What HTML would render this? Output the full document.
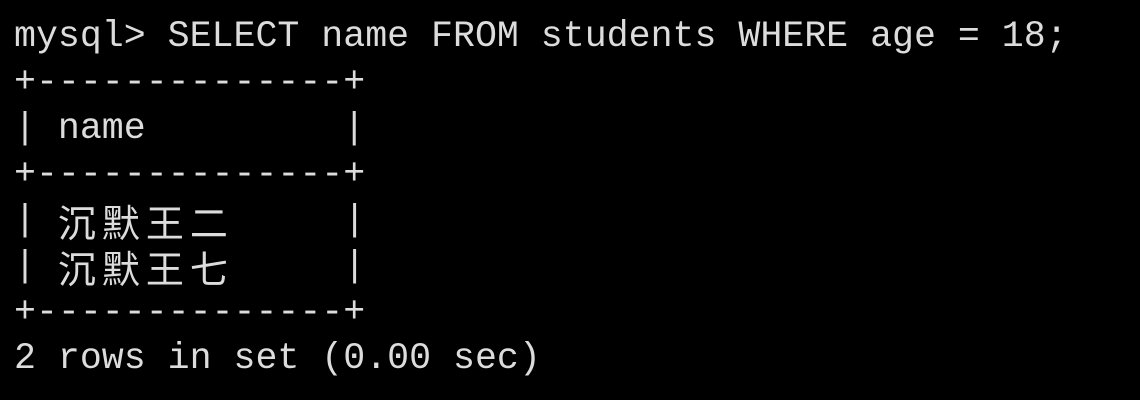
<!DOCTYPE html>
<html><head><meta charset="utf-8"><style>
html,body{margin:0;padding:0;background:#000;width:1140px;height:400px;overflow:hidden}
pre{margin:0;position:absolute;left:14px;top:14px;font-family:"Liberation Mono",monospace;font-size:36.6px;line-height:46px;color:#dcdcdc;white-space:pre;letter-spacing:0}
.l{display:block;height:46px;line-height:46px;overflow:visible}
.c{display:inline-block;width:44px;height:46px;line-height:46px;vertical-align:top;text-align:left;font-family:"Noto Sans CJK SC",sans-serif;font-size:38px}
</style></head><body>
<pre><span class="l">mysql&gt; SELECT name FROM students WHERE age = 18;</span><span class="l">+--------------+</span><span class="l">| name         |</span><span class="l">+--------------+</span><span class="l">| <span class="c">沉</span><span class="c">默</span><span class="c">王</span><span class="c">二</span>     |</span><span class="l">| <span class="c">沉</span><span class="c">默</span><span class="c">王</span><span class="c">七</span>     |</span><span class="l">+--------------+</span><span class="l">2 rows in set (0.00 sec)</span></pre>
</body></html>
